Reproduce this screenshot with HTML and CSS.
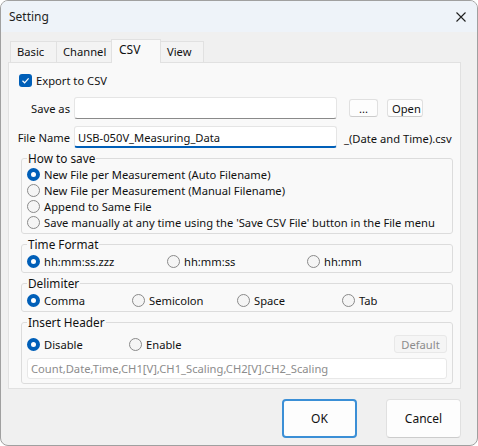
FILE: index.html
```html
<!DOCTYPE html>
<html>
<head>
  <meta charset="utf-8">
  <title>Setting</title>
  <link rel="stylesheet" href="styles.css">
</head>
<body>
  <div class="window">
    <div class="titlebar">
      <span class="title">Setting</span>
      <svg class="close-icon" width="10" height="10" viewBox="0 0 10 10">
        <path d="M0.5 0.5 L9.5 9.5 M9.5 0.5 L0.5 9.5" stroke="#1f1f1f" stroke-width="1.1" fill="none"/>
      </svg>
    </div>
    <div class="client">
      <div class="tabs">
        <div class="tab tab-basic">Basic</div>
        <div class="tab tab-channel">Channel</div>
        <div class="tab tab-csv active">CSV</div>
        <div class="tab tab-view">View</div>
      </div>
      <div class="panel">
        <div class="check-row">
          <span class="checkbox checked">
            <svg width="9" height="9" viewBox="0 0 9 9">
              <path d="M1.5 4.8 L3.6 6.8 L7.6 2.3" stroke="#ffffff" stroke-width="1.2" fill="none"/>
            </svg>
          </span>
          <span>Export to CSV</span>
        </div>
        <div class="field-row save-row">
          <span class="field-label">Save as</span>
          <div class="textbox"></div>
          <button class="btn btn-small btn-browse">...</button>
          <button class="btn btn-small btn-open">Open</button>
        </div>
        <div class="field-row name-row">
          <span class="field-label">File Name</span>
          <div class="textbox focused">USB-050V_Measuring_Data</div>
          <span class="suffix">_(Date and Time).csv</span>
        </div>

        <fieldset class="group">
          <legend>How to save</legend>
          <div class="radio-list">
            <div class="radio checked"><span class="dot"></span>New File per Measurement (Auto Filename)</div>
            <div class="radio"><span class="dot"></span>New File per Measurement (Manual Filename)</div>
            <div class="radio"><span class="dot"></span>Append to Same File</div>
            <div class="radio"><span class="dot"></span>Save manually at any time using the 'Save CSV File' button in the File menu</div>
          </div>
        </fieldset>

        <fieldset class="group">
          <legend>Time Format</legend>
          <div class="radio-row cols-3">
            <div class="radio checked"><span class="dot"></span>hh:mm:ss.zzz</div>
            <div class="radio"><span class="dot"></span>hh:mm:ss</div>
            <div class="radio"><span class="dot"></span>hh:mm</div>
          </div>
        </fieldset>

        <fieldset class="group">
          <legend>Delimiter</legend>
          <div class="radio-row cols-4">
            <div class="radio checked"><span class="dot"></span>Comma</div>
            <div class="radio"><span class="dot"></span>Semicolon</div>
            <div class="radio"><span class="dot"></span>Space</div>
            <div class="radio"><span class="dot"></span>Tab</div>
          </div>
        </fieldset>

        <fieldset class="group header-group">
          <legend>Insert Header</legend>
          <div class="radio-row header-row">
            <div class="radio checked"><span class="dot"></span>Disable</div>
            <div class="radio"><span class="dot"></span>Enable</div>
            <button class="btn btn-small btn-default" disabled>Default</button>
          </div>
          <div class="textbox disabled">Count,Date,Time,CH1[V],CH1_Scaling,CH2[V],CH2_Scaling</div>
        </fieldset>
      </div>
      <div class="footer">
        <button class="btn btn-dialog btn-primary">OK</button>
        <button class="btn btn-dialog">Cancel</button>
      </div>
    </div>
  </div>
</body>
</html>
```

FILE: styles.css
```css
:root {
  --window-bg: #f0f0f0;
  --title-bg: #eef3f9;
  --panel-bg: #f9f9f9;
  --text-color: #111111;
  --muted-text: #8c8c8c;
  --border-light: #e1e1e1;
  --group-border: #dcdcdc;
  --accent: #005fb8;
  --field-bg: #ffffff;
}
* {
  margin: 0;
  padding: 0;
  box-sizing: border-box;
}
body {
  background: #ffffff;
  font-family: "Noto Sans", "Open Sans", sans-serif;
  font-size: 11.2px;
  color: var(--text-color);
}
.window {
  width: 478px;
  height: 446px;
  border: 1px solid #a0a0a0;
  border-radius: 8px;
  overflow: hidden;
  background: var(--window-bg);
  display: flex;
  flex-direction: column;
}
.titlebar {
  height: 31px;
  flex: none;
  background: var(--title-bg);
  display: flex;
  align-items: center;
  justify-content: space-between;
  padding: 0 11px 0 8px;
}
.title {
  font-size: 12px;
  color: #1f1f1f;
}
.client {
  flex: 1;
  padding: 7px 16px 0 7px;
  display: flex;
  flex-direction: column;
}
.tabs {
  display: flex;
  align-items: flex-end;
  height: 23px;
  padding-left: 2px;
}
.tab {
  height: 21px;
  padding: 0 6px;
  line-height: 19px;
  border: 1px solid var(--border-light);
  border-bottom: none;
  background: #f3f3f3;
  color: var(--text-color);
}
.tab + .tab {
  margin-left: -1px;
}
.tab-basic { width: 47px; }
.tab-channel { width: 56px; }
.tab-view { width: 44px; }
.tab.active {
  width: 50px;
  height: 24px;
  padding: 0 7px;
  line-height: 20px;
  font-size: 12px;
  background: var(--panel-bg);
  position: relative;
  margin-bottom: -1px;
  z-index: 1;
}
.panel {
  width: 453px;
  height: 327px;
  flex: none;
  border: 1px solid var(--border-light);
  background: var(--panel-bg);
  padding: 9px 0 0 0;
  display: flex;
  flex-direction: column;
}
.check-row {
  display: flex;
  align-items: center;
  gap: 4px;
  height: 16px;
  margin-left: 10px;
}
.checkbox {
  width: 13px;
  height: 13px;
  border-radius: 3px;
  display: flex;
  align-items: center;
  justify-content: center;
}
.checkbox.checked {
  background: var(--accent);
}
.field-row {
  display: flex;
  align-items: center;
}
.save-row {
  margin-top: 9px;
  height: 22px;
}
.name-row {
  margin-top: 7px;
  height: 22px;
  align-items: stretch;
}
.field-label {
  width: 61px;
  text-align: right;
  margin-right: 4px;
  align-self: center;
}
.textbox {
  width: 263px;
  height: 22px;
  background: var(--field-bg);
  border: 1px solid #e5e5e5;
  border-bottom-color: #8a8a8a;
  border-radius: 3px;
  padding: 0 3px;
  line-height: 20px;
  white-space: nowrap;
  overflow: hidden;
}
.textbox.focused {
  border-bottom: 2px solid var(--accent);
  line-height: 21px;
}
.suffix {
  margin-left: 7px;
  align-self: flex-end;
  line-height: 16px;
  margin-bottom: 1px;
  white-space: nowrap;
}
.btn {
  font-family: inherit;
  font-size: 11.2px;
  color: var(--text-color);
  background: #fdfdfd;
  border: 1px solid #e0e0e0;
  border-bottom-color: #cccccc;
  border-radius: 3px;
}
.btn-small {
  height: 18px;
  line-height: 15px;
  padding: 0 4px;
}
.btn-browse {
  width: 29px;
  margin-left: 12px;
}
.btn-open {
  width: 36px;
  margin-left: 9px;
}
.group {
  width: 432px;
  margin-left: 12px;
  border: 1px solid var(--group-border);
  border-radius: 3px;
  padding: 0 5px 3px;
  min-width: 0;
}
.group + .group {
  margin-top: 2px;
}
.name-row + .group {
  margin-top: 2px;
}
.group legend {
  line-height: 16px;
  padding: 0 1px;
  margin-left: 0;
  font-size: 11.8px;
}
.radio {
  display: flex;
  align-items: center;
  gap: 4px;
  height: 16px;
  white-space: nowrap;
}
.radio .dot {
  width: 13px;
  height: 13px;
  flex: none;
  border-radius: 50%;
  border: 1px solid #8a8a8a;
  background: #f5f5f5;
}
.radio.checked .dot {
  border: 4px solid var(--accent);
  background: #ffffff;
}
.radio-row {
  display: flex;
  align-items: center;
  padding-top: 1px;
}
.radio-row + .textbox {
  margin-top: 4px;
}
.cols-3 .radio { width: 141px; }
.cols-4 .radio { width: 106px; }
.header-group {
  padding-bottom: 4px;
}
.header-row {
  height: 20px;
  padding-top: 0;
  margin-top: 4px;
}
.header-row .radio { width: 102px; }
.btn-default {
  margin-left: auto;
  width: 53px;
  color: var(--muted-text);
  background: #f5f5f5;
  border-color: #e8e8e8;
}
.textbox.disabled {
  width: 420px;
  height: 21px;
  color: var(--muted-text);
  border-color: #e8e8e8;
  background: #ffffff;
  line-height: 19px;
}
.footer {
  display: flex;
  justify-content: flex-end;
  gap: 29px;
  margin-top: 10px;
}
.btn-dialog {
  width: 75px;
  height: 39px;
  font-size: 12px;
  border-radius: 4px;
}
.btn-primary {
  border: 2px solid #3b8fd6;
}
```
